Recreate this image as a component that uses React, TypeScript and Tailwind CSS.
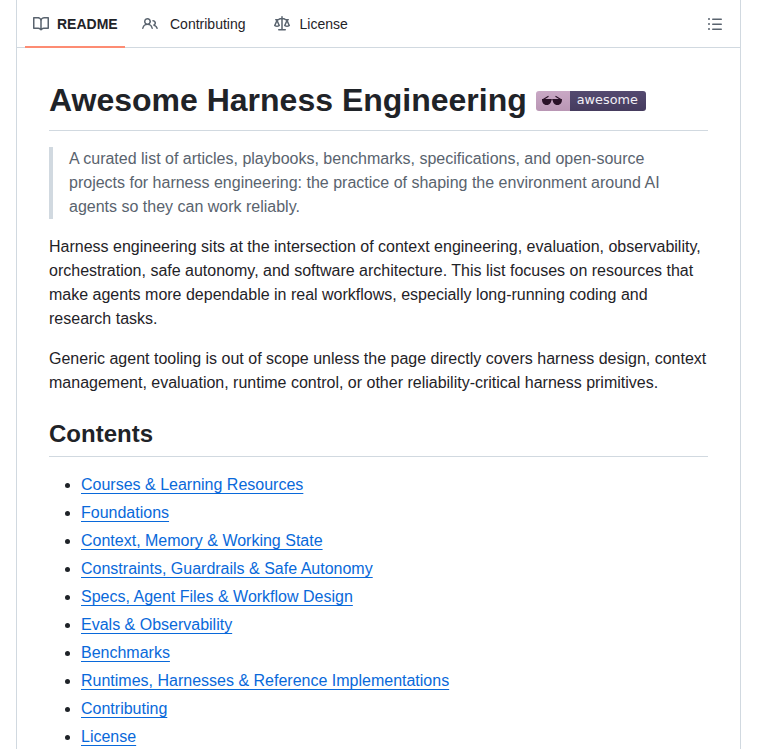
const BOOK = "M0 1.75A.75.75 0 0 1 .75 1h4.253c1.227 0 2.317.59 3 1.501A3.743 3.743 0 0 1 11.006 1h4.245a.75.75 0 0 1 .75.75v10.5a.75.75 0 0 1-.75.75h-4.507a2.25 2.25 0 0 0-1.591.659l-.622.621a.75.75 0 0 1-1.06 0l-.622-.621A2.25 2.25 0 0 0 5.258 13H.75a.75.75 0 0 1-.75-.75Zm7.251 10.324.004-5.073-.002-2.253A2.25 2.25 0 0 0 5.003 2.5H1.5v9h3.757a3.75 3.75 0 0 1 1.994.574ZM8.755 4.75l-.004 7.322a3.752 3.752 0 0 1 1.992-.572H14.5v-9h-3.495a2.25 2.25 0 0 0-2.25 2.25Z";
const PEOPLE = "M2 5.5a3.5 3.5 0 1 1 5.898 2.549 5.508 5.508 0 0 1 3.034 4.084.75.75 0 1 1-1.482.235 4 4 0 0 0-7.9 0 .75.75 0 0 1-1.482-.236A5.507 5.507 0 0 1 3.102 8.05 3.493 3.493 0 0 1 2 5.5ZM11 4a3.001 3.001 0 0 1 2.22 5.018 5.01 5.01 0 0 1 2.56 3.012.749.749 0 0 1-.885.954.752.752 0 0 1-.549-.514 3.507 3.507 0 0 0-2.522-2.372.75.75 0 0 1-.574-.73v-.352a.75.75 0 0 1 .416-.672A1.5 1.5 0 0 0 11 5.5.75.75 0 0 1 11 4Zm-5.5-.5a2 2 0 1 0-.001 3.999A2 2 0 0 0 5.5 3.5Z";
const LAW = "M8.75.75V2h.985c.304 0 .603.08.867.231l1.29.736c.038.022.08.033.124.033h2.234a.75.75 0 0 1 0 1.5h-.427l2.111 4.692a.75.75 0 0 1-.154.838l-.53-.53.529.531-.001.002-.002.002-.006.006-.006.005-.01.01-.045.04c-.21.176-.441.327-.686.45C14.556 10.78 13.88 11 13 11a4.498 4.498 0 0 1-2.023-.454 3.544 3.544 0 0 1-.686-.45l-.045-.04-.016-.015-.006-.006-.004-.004v-.001a.75.75 0 0 1-.154-.838L12.178 4.5h-.162c-.305 0-.604-.079-.868-.231l-1.29-.736a.245.245 0 0 0-.124-.033H8.75V13h2.5a.75.75 0 0 1 0 1.5h-6.5a.75.75 0 0 1 0-1.5h2.5V3.5h-.984a.245.245 0 0 0-.124.033l-1.289.737c-.265.15-.564.23-.869.23h-.162l2.112 4.692a.75.75 0 0 1-.154.838l-.53-.53.529.531-.001.002-.002.002-.006.006-.016.015-.045.04c-.21.176-.441.327-.686.45C4.556 10.78 3.88 11 3 11a4.498 4.498 0 0 1-2.023-.454 3.544 3.544 0 0 1-.686-.45l-.045-.04-.016-.015-.006-.006-.004-.004v-.001a.75.75 0 0 1-.154-.838L2.178 4.5H1.750a.75.75 0 0 1 0-1.5h2.234a.249.249 0 0 0 .125-.033l1.288-.737c.265-.15.564-.23.869-.23h.984V.75a.75.75 0 0 1 1.5 0Zm2.945 8.477c.285.135.718.273 1.305.273s1.020-.138 1.305-.273L13 6.327Zm-10 0c.285.135.718.273 1.305.273s1.020-.138 1.305-.273L3 6.327Z";
const LIST = "M5.75 2.5h8.5a.75.75 0 0 1 0 1.5h-8.5a.75.75 0 0 1 0-1.5Zm0 5h8.5a.75.75 0 0 1 0 1.5h-8.5a.75.75 0 0 1 0-1.5Zm0 5h8.5a.75.75 0 0 1 0 1.5h-8.5a.75.75 0 0 1 0-1.5ZM2 14a1 1 0 1 1 0-2 1 1 0 0 1 0 2Zm1-6a1 1 0 1 1-2 0 1 1 0 0 1 2 0ZM2 4a1 1 0 1 1 0-2 1 1 0 0 1 0 2Z";

function Octicon({ d }: { d: string }) {
  return (
    <svg viewBox="0 0 16 16" width="16" height="16" fill="#59636e" className="shrink-0">
      <path d={d} />
    </svg>
  );
}

const links = [
  "Courses & Learning Resources",
  "Foundations",
  "Context, Memory & Working State",
  "Constraints, Guardrails & Safe Autonomy",
  "Specs, Agent Files & Workflow Design",
  "Evals & Observability",
  "Benchmarks",
  "Runtimes, Harnesses & Reference Implementations",
  "Contributing",
  "License",
];

function Badge() {
  return (
    <span className="mt-px inline-flex h-5 w-[110px] overflow-hidden rounded-[3px]">
      <span className="flex w-[34px] items-center justify-center bg-gradient-to-b from-[#c9a8c5] to-[#b996b4] pr-[2px]">
        <svg viewBox="0 0 20 11" width="20" height="11" fill="#2a1228">
          <path d="M0 4h9c.3 0 .4.2.4.5 0 2.800-1.400 5.500-4.700 5.500C1.500 10 0 7.500 0 4.500 0 4.200 0 4 0 4Zm10.800 0h8.900c.2 0 .3.2.3.5 0 3-1.400 5.500-4.600 5.500-3.300 0-4.700-2.700-4.700-5.500 0-.3 0-.5.100-.5Z" />
          <path d="M9 5c.7-.5 1.400-.5 2.100 0" fill="none" stroke="#2a1228" strokeWidth="1" />
          <path d="M1.200 4.500 6.500 1.200M18.800 4.500 13.500 1.200" fill="none" stroke="#2a1228" strokeWidth="1.100" />
        </svg>
      </span>
      <span className="flex flex-1 items-center justify-center bg-gradient-to-b from-[#544a70] to-[#453b5e] pr-[1px] font-['DejaVu_Sans',sans-serif] text-[12.8px] font-normal leading-none text-[#f2f0f6]">
        awesome
      </span>
    </span>
  );
}

export default function App() {
  return (
    <div className="h-[749px] overflow-hidden bg-white font-['Liberation_Sans',sans-serif] text-base leading-6 text-[#1f2328]">
      <div className="ml-4 mt-[-6px] w-[725px] rounded-md border border-[#d1d9e0] pb-8 pt-[6px]">
        <div className="flex h-[47px] items-stretch justify-between border-b border-[#d1d9e0] pl-2 pr-[17px]">
          <nav className="flex items-stretch text-sm">
            <a className="relative flex w-[100px] items-center gap-2 pl-2 font-semibold">
              <Octicon d={BOOK} />
              README
              <span className="absolute inset-x-0 bottom-[-1px] h-0.5 bg-[#fd8c73]" />
            </a>
            <a className="flex items-center gap-3 pl-[17px]">
              <Octicon d={PEOPLE} />
              Contributing
            </a>
            <a className="flex items-center gap-2.5 pl-[28px]">
              <Octicon d={LAW} />
              License
            </a>
          </nav>
          <div className="flex items-center">
            <Octicon d={LIST} />
          </div>
        </div>
        <article className="px-8 pt-8">
          <h1 className="flex items-center gap-[9px] border-b border-[#d1d9e0] pb-[10px] text-[32px] font-semibold leading-10">
            Awesome Harness Engineering
            <Badge />
          </h1>
          <blockquote className="mt-4 border-l-4 border-[#d1d9e0] pl-4 pr-8 text-[#59636e]">
            A curated list of articles, playbooks, benchmarks, specifications, and open-source projects for harness
            engineering: the practice of shaping the environment around AI agents so they can work reliably.
          </blockquote>
          <p className="mt-4">
            Harness engineering sits at the intersection of context engineering, evaluation, observability,
            orchestration, safe autonomy, and software architecture. This list focuses on resources that make agents
            more dependable in real workflows, especially long-running coding and research tasks.
          </p>
          <p className="mt-4">
            Generic agent tooling is out of scope unless the page directly covers harness design, context management,
            evaluation, runtime control, or other reliability-critical harness primitives.
          </p>
          <h2 className="mt-6 border-b border-[#d1d9e0] pb-[7px] text-2xl font-semibold leading-[30px]">Contents</h2>
          <ul className="mt-4 flex list-disc flex-col gap-1 pl-8">
            {links.map((t) => (
              <li key={t}>
                <a className="text-[#0969da] underline underline-offset-[3.2px]">{t}</a>
              </li>
            ))}
          </ul>
        </article>
      </div>
    </div>
  );
}
